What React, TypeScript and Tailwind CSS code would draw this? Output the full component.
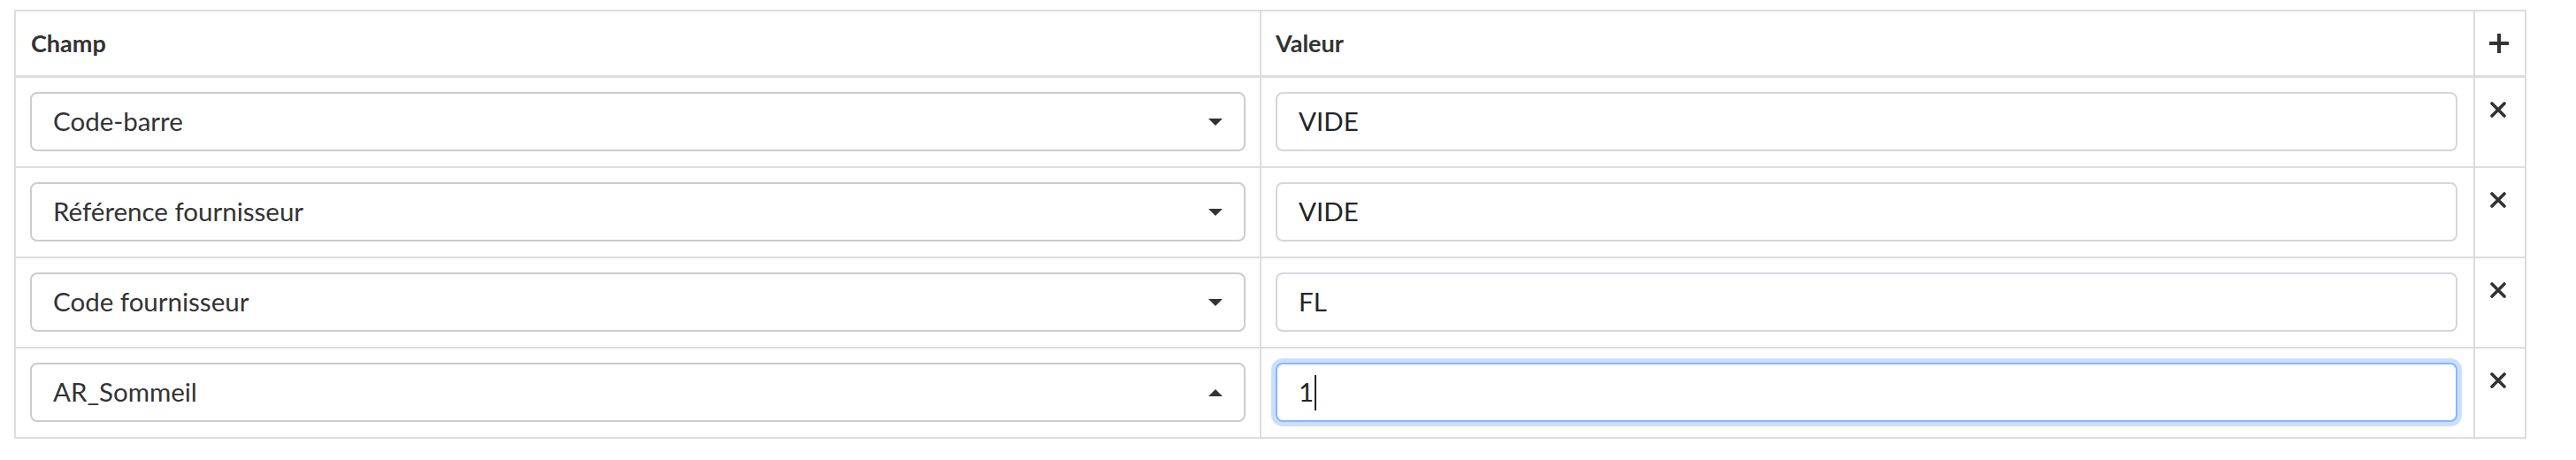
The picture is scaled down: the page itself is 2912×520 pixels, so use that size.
import React from 'react';

interface Row {
  champ: string;
  valeur: string;
  open?: boolean;
}

const rows: Row[] = [
  { champ: 'Code-barre', valeur: 'VIDE' },
  { champ: 'Référence fournisseur', valeur: 'VIDE' },
  { champ: 'Code fournisseur', valeur: 'FL' },
  { champ: 'AR_Sommeil', valeur: '1', open: true },
];

const Caret: React.FC<{ up?: boolean }> = ({ up }) => (
  <svg width="16" height="8" viewBox="0 0 16 8" className="shrink-0">
    {up ? <path d="M0 8 L8 0 L16 8 Z" fill="#333" /> : <path d="M0 0 L16 0 L8 8 Z" fill="#333" />}
  </svg>
);

const PlusIcon = () => (
  <svg width="22" height="22" viewBox="0 0 22 22">
    <path d="M11 1 V21 M1 11 H21" stroke="#333" strokeWidth="4" strokeLinecap="round" />
  </svg>
);

const CloseIcon = () => (
  <svg width="18" height="18" viewBox="0 0 18 18">
    <path d="M2 2 L16 16 M16 2 L2 16" stroke="#333" strokeWidth="3.6" strokeLinecap="round" />
  </svg>
);

export default function App() {
  return (
    <div className="min-h-[520px] bg-white pt-[11px] pl-[16px] font-[Lato,sans-serif] text-[#333]">
      <table className="w-[2838px] table-fixed border-collapse border-2 border-[#dddddd]">
        <colgroup>
          <col className="w-[1408px]" />
          <col className="w-[1372px]" />
          <col className="w-[58px]" />
        </colgroup>
        <thead>
          <tr className="h-[74px] border-b-[3px] border-[#dddddd]">
            <th className="border-r-2 border-[#dddddd] px-[17px] text-left text-[27px] font-bold">Champ</th>
            <th className="border-r-2 border-[#dddddd] px-[16px] text-left text-[27px] font-bold">Valeur</th>
            <th className="text-center">
              <div className="flex justify-center pr-[2px]">
                <PlusIcon />
              </div>
            </th>
          </tr>
        </thead>
        <tbody>
          {rows.map((row) => (
            <tr key={row.champ} className="border-b-2 border-[#dddddd]">
              <td className="border-r-2 border-[#dddddd] px-[16px] py-[16.5px]">
                <div className="flex h-[67px] items-center justify-between rounded-[8px] border-2 border-[#cccccc] bg-white pl-[24px] pr-[24px] text-[29.5px]">
                  <span>{row.champ}</span>
                  <Caret up={row.open} />
                </div>
              </td>
              <td className="border-r-2 border-[#dddddd] pl-[16px] pr-[18px] py-[16.5px]">
                {row.open ? (
                  <div className="flex h-[67px] items-center rounded-[8px] border-2 border-[#86b7fe] bg-white pl-[24px] text-[29.5px] text-[#212529] shadow-[0_0_0_5px_rgba(13,110,253,0.22)]">
                    <span>{row.valeur}</span>
                    <span className="ml-[1px] h-[40px] w-[2px] bg-[#212529]" />
                  </div>
                ) : (
                  <div className="flex h-[67px] items-center rounded-[8px] border-2 border-[#d3d7dc] bg-white pl-[24px] text-[29.5px] text-[#212529]">
                    {row.valeur}
                  </div>
                )}
              </td>
              <td className="align-top pt-[27px]">
                <div className="flex justify-center pr-[5px]">
                  <CloseIcon />
                </div>
              </td>
            </tr>
          ))}
        </tbody>
      </table>
    </div>
  );
}
